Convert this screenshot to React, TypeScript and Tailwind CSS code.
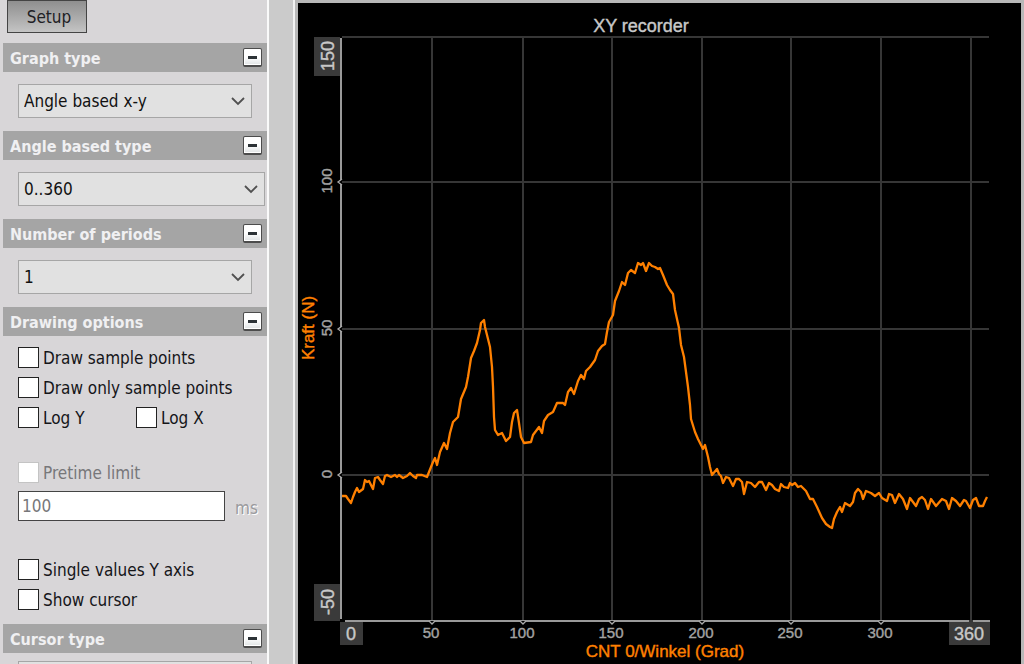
import React, { useState } from 'react';

interface SectionHeaderProps {
  title: string;
}

const SectionHeader: React.FC<SectionHeaderProps> = ({ title }) => (
  <div className="flex h-[29px] items-center justify-between bg-[#a5a5a5] pl-[7px] pr-[5px]">
    <h2 className="pt-[2px] text-base leading-5 font-bold text-[#f0f0f2]">{title}</h2>
    <button
      type="button"
      aria-label={`Collapse ${title}`}
      className="flex size-[19px] items-center justify-center rounded-[2px] border border-b-2 border-[#4c4c4c] bg-linear-to-b from-white from-50% to-[#dfe3e4] shadow-[inset_0_0_0_1px_#ffffff]"
    >
      <span className="h-[3px] w-[9px] bg-[#2c3236]" />
    </button>
  </div>
);

interface DropdownProps {
  label: string;
  options: string[];
  wide?: boolean;
  tight?: boolean;
}

const Dropdown: React.FC<DropdownProps> = ({ label, options, wide, tight }) => (
  <div className={`relative mb-[13px] ml-[15px] ${tight ? 'mt-2' : 'mt-3'} ${wide ? 'mr-[2px]' : 'mr-[15px]'}`}>
    <select
      aria-label={label}
      className="block h-[34px] w-full appearance-none border border-[#a6a6a6] bg-[#e1e1e1] pl-[5px] pr-8 text-[#111111]"
    >
      {options.map((option) => (
        <option key={option}>{option}</option>
      ))}
    </select>
    <svg
      className="pointer-events-none absolute right-[7px] top-[13px] h-[9px] w-[14px]"
      viewBox="0 0 14 9"
      fill="none"
      stroke="#505050"
      strokeWidth="1.8"
    >
      <path d="M1 1l6 6 6-6" />
    </svg>
  </div>
);

interface CheckProps {
  label: string;
  disabled?: boolean;
}

const Check: React.FC<CheckProps> = ({ label, disabled }) => (
  <label className={`flex h-[30px] items-center gap-1 ${disabled ? 'text-[#77777a]' : 'text-[#151518]'}`}>
    <input
      type="checkbox"
      disabled={disabled}
      className="size-[21px] shrink-0 appearance-none border border-[#222222] bg-white checked:bg-[#333333] disabled:border-[#c4c4c4]"
    />
    <span className="pt-px">{label}</span>
  </label>
);

const Sidebar: React.FC = () => {
  const [pretime, setPretime] = useState('100');

  return (
    <aside className="w-[269px] shrink-0 overflow-hidden border-r-2 border-[#fafafa] bg-[#d8d6d8] pl-[3px] font-['DejaVu_Sans_Condensed','DejaVu_Sans',sans-serif] text-[17px] leading-5">
      <button
        type="button"
        className="mb-[10px] ml-1 block h-[33px] w-[80px] border border-[#444444] bg-linear-to-b from-[#8f8f8f] to-[#c4c4c4] pl-1 text-[#202024]"
      >
        Setup
      </button>
      <SectionHeader title="Graph type" />
      <Dropdown label="Graph type" options={['Angle based x-y']} />
      <SectionHeader title="Angle based type" />
      <Dropdown label="Angle based type" options={['0..360']} wide />
      <SectionHeader title="Number of periods" />
      <Dropdown label="Number of periods" options={['1']} />
      <SectionHeader title="Drawing options" />
      <div className="pt-[6px] pb-[10px] pl-[15px]">
        <Check label="Draw sample points" />
        <Check label="Draw only sample points" />
        <div className="grid grid-cols-[118px_1fr]">
          <Check label="Log Y" />
          <Check label="Log X" />
        </div>
        <div className="mt-[25px]">
          <Check label="Pretime limit" disabled />
        </div>
        <div className="mt-1 flex h-[30px] items-center gap-[10px]">
          <input
            id="pretime"
            type="text"
            value={pretime}
            onChange={(e) => setPretime(e.target.value)}
            className="h-[30px] w-[207px] border border-[#444444] bg-white px-[3px] text-[#77777a]"
          />
          <label htmlFor="pretime" className="pt-1 text-[#9a9a9d] [text-shadow:1px_1px_0_#ffffff]">
            ms
          </label>
        </div>
        <div className="mt-[33px]">
          <Check label="Single values Y axis" />
          <Check label="Show cursor" />
        </div>
      </div>
      <SectionHeader title="Cursor type" />
      <Dropdown label="Cursor type" options={['']} tight />
    </aside>
  );
};

const X_TICKS = [
  { label: '50', x: 432 },
  { label: '100', x: 523 },
  { label: '150', x: 612 },
  { label: '200', x: 702 },
  { label: '250', x: 791 },
  { label: '300', x: 881 },
];

const Y_TICKS = [
  { label: '100', y: 182 },
  { label: '50', y: 329 },
  { label: '0', y: 475 },
];

const TRACE = [
  '342,496 346,496 348,499 351,503 353,497 355,492 357,488 359,492 363,489 365,480 367,482 369,481 371,485 373,489',
  '375,478 378,477 380,480 383,484 385,476 387,475 391,477 395,475 397,477 399,475 403,478 407,476 410,473 413,476',
  '416,478 417,475 422,475 427,477 429,472 433,462 435,458 437,465 440,452 444,443 447,449 450,433 453,422 458,417',
  '461,399 466,387 468,377 471,358 474,351 477,343 480,330 481,323 484,320 485,327 488,339 490,347 492,367 493,387',
  '494,417 495,430 498,435 502,433 506,441 510,437 512,422 514,413 517,410 519,423 521,437 524,443 531,442 533,435',
  '539,427 542,433 544,421 548,415 553,412 557,403 563,403 565,405 568,392 571,388 574,394 578,381 581,375 584,379',
  '586,371 590,367 595,360 598,351 602,346 605,344 607,332 609,322 613,315 615,301 619,291 622,282 625,285 628,273',
  '631,270 635,273 638,263 641,265 643,263 646,271 649,263 652,266 655,267 658,269 660,268 663,275 667,285 670,290',
  '673,294 675,310 677,319 679,328 681,345 684,357 686,372 688,387 690,405 691,419 695,432 698,439 703,449 705,445',
  '708,457 710,467 712,475 717,469 719,474 721,476 723,483 726,477 729,478 731,482 733,486 736,479 739,479 742,482',
  '744,494 747,482 751,483 755,487 759,482 762,482 766,490 769,483 772,485 775,489 779,491 781,484 784,487 788,488',
  '790,483 792,485 795,483 798,487 801,486 806,491 810,499 813,499 817,507 822,518 826,524 830,527 832,528 834,519',
  '837,512 840,507 842,512 845,503 850,506 853,502 855,493 858,489 861,492 863,499 866,491 871,493 875,496 879,493',
  '882,498 887,501 889,494 892,495 895,503 899,494 903,499 907,509 910,498 916,506 919,499 922,497 925,500 928,509',
  '931,499 936,506 942,499 946,501 949,509 952,498 956,501 960,506 964,500 966,501 970,508 973,500 976,498 979,506',
  '983,506 985,501 987,497',
].join(' ');

const Recorder: React.FC = () => (
  <svg
    className="block h-auto w-full font-['Liberation_Sans',Arial,sans-serif]"
    viewBox="299 4 722 660"
    role="img"
    aria-label="XY recorder"
  >
    <g stroke="#363636" strokeWidth="2">
      <path d="M342 37H989M342 182H989M342 329H989M342 475H989" />
      {X_TICKS.map((tick) => (
        <path key={tick.label} d={`M${tick.x} 37V620`} />
      ))}
      <path d="M971 37V620" />
    </g>

    {/* axes with their tick marks */}
    <path d="M341 38V619M345 621H990" stroke="#999999" strokeWidth="2" />
    <path d="M969 621h4" stroke="#363636" strokeWidth="2" />
    <g fill="#000000" stroke="#aaaaaa" strokeWidth="1.3">
      {Y_TICKS.map((tick) => (
        <path key={tick.label} d={`M342 ${tick.y - 3}l-4 3 4 3`} />
      ))}
      {X_TICKS.map((tick) => (
        <path key={tick.label} d={`M${tick.x - 3} 621l3 3 3-3`} />
      ))}
    </g>

    <g fill="#3a3a3a">
      <path d="M314 37h26v39h-26zM314 584h26v37h-26zM340 622h23v23h-23zM949 622h41v23h-41z" />
    </g>

    <g fill="#a3a3a3" stroke="#a3a3a3" strokeWidth="0.4" fontSize="15" textAnchor="middle">
      {Y_TICKS.map((tick) => (
        <text key={tick.label} transform={`translate(332 ${tick.y - 1}) rotate(-90)`}>
          {tick.label}
        </text>
      ))}
      {X_TICKS.map((tick) => (
        <text key={tick.label} x={tick.x - 1} y="638">
          {tick.label}
        </text>
      ))}
    </g>
    <g fill="#c8c8c8" stroke="#c8c8c8" strokeWidth="0.4" fontSize="18" textAnchor="middle">
      <text transform="translate(334 56) rotate(-90)">150</text>
      <text transform="translate(334 602) rotate(-90)">-50</text>
      <text x="351" y="640">0</text>
      <text x="969" y="640">360</text>
      <text x="641" y="32">XY recorder</text>
    </g>
    <g fill="#ff8000" stroke="#ff8000" strokeWidth="0.4" textAnchor="middle">
      <text fontSize="17" transform="translate(314 328) rotate(-90)">
        Kraft (N)
      </text>
      <text fontSize="17" x="665" y="657">
        CNT 0/Winkel (Grad)
      </text>
    </g>

    <polyline points={TRACE} fill="none" stroke="#ff8000" strokeWidth="2.3" strokeLinejoin="round" />
  </svg>
);

const App: React.FC = () => (
  <div className="flex h-screen overflow-hidden bg-[#cbcbcb]">
    <Sidebar />
    <main className="ml-6 flex-1 overflow-hidden border-l-2 border-[#f2f2f2]">
      <div className="h-full border-x-[3px] border-t-[3px] border-[#b8b8b8] bg-black pt-px pl-px">
        <Recorder />
      </div>
    </main>
  </div>
);

export default App;
